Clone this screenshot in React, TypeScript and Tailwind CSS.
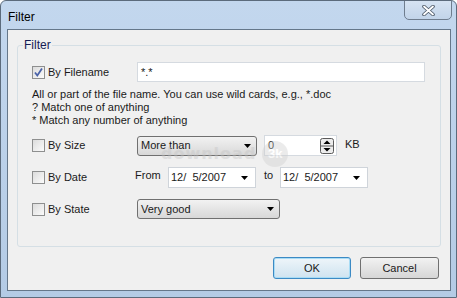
import React from 'react';

const font = { fontFamily: '"Liberation Sans", Arial, sans-serif' };

const Check = ({ checked }: { checked?: boolean }) => (
  <div className="w-[13px] h-[13px] border border-[#8e8f8f] bg-gradient-to-br from-[#dcdcdc] to-[#fbfbfb] flex items-center justify-center shrink-0">
    {checked && (
      <svg width="11" height="11" viewBox="0 0 11 11">
        <path d="M2 5.5 L4.3 8.5 L9 1.5" fill="none" stroke="#4a62a8" strokeWidth="1.8" />
      </svg>
    )}
  </div>
);

const Arrow = () => (
  <svg width="7" height="4" viewBox="0 0 7 4" className="shrink-0">
    <path d="M0 0 H7 L3.5 4 Z" fill="#000" />
  </svg>
);

const Combo = ({ value, w }: { value: string; w: string }) => (
  <div className={`${w} h-[20px] rounded-[3px] border border-[#707070] bg-gradient-to-b from-[#f2f2f2] to-[#d8d8d8] flex items-center pl-[3px] pr-[5px] justify-between`}>
    <span>{value}</span>
    <Arrow />
  </div>
);

const DateBox = ({ value }: { value: string }) => (
  <div className="w-[88px] h-[21px] border border-[#cfd4da] bg-white flex items-center pl-[2px] pr-[7px] justify-between">
    <span className="whitespace-pre">{value}</span>
    <Arrow />
  </div>
);

const Label = ({ checked, text }: { checked?: boolean; text: string }) => (
  <div className="w-[105px] flex items-center gap-[3px] shrink-0">
    <Check checked={checked} />
    <span>{text}</span>
  </div>
);

export default function App() {
  return (
    <div
      className="w-[457px] h-[298px] overflow-hidden relative bg-gradient-to-b from-[#c3d7ee] to-[#b4cbe5] border border-[#5c6b7c] rounded-t-[6px] text-[11px] text-[#1a1a1a] flex flex-col"
      style={font}
    >
      {/* title bar */}
      <div className="h-[28px] flex items-start justify-between shrink-0">
        <span className="ml-[7px] mt-[7px] text-[12px] text-black">Filter</span>
        <div className="w-[48px] h-[20px] mr-[4px] -mt-px rounded-b-[5px] border border-[#6f7d8e] bg-gradient-to-b from-[#d6e3f2] to-[#c2d4e9] flex items-center justify-center">
          <svg width="13" height="11" viewBox="0 0 13 11">
            <path d="M2 1.5 L11 9.5 M11 1.5 L2 9.5" stroke="#4d5968" strokeWidth="3.6" strokeLinecap="round" />
            <path d="M2 1.5 L11 9.5 M11 1.5 L2 9.5" stroke="#fff" strokeWidth="1.8" strokeLinecap="round" />
          </svg>
        </div>
      </div>

      {/* client area */}
      <div className="ml-[6px] mr-[5px] h-[262px] border border-[#65778a] bg-[#f0f0f0] flex flex-col shrink-0">
        {/* group box */}
        <div className="relative ml-[9px] mt-[15px] w-[424px] h-[202px] border border-[#d5dfe5] rounded-[3px] flex flex-col pl-[14px]">
          <span className="absolute -top-[8px] left-[5px] px-[1px] bg-[#f0f0f0] text-[12px] text-[#151c55] leading-[14px]">Filter</span>

          <div className="mt-[16px] flex items-center h-[20px]">
            <Label checked text="By Filename" />
            <div className="w-[288px] h-[20px] border border-[#d5dae0] bg-white flex items-center pl-[3px]">*.*</div>
          </div>

          <div className="mt-[6px] leading-[13px]">
            <div>All or part of the file name. You can use wild cards, e.g., *.doc</div>
            <div>? Match one of anything</div>
            <div>* Match any number of anything</div>
          </div>

          <div className="mt-[8px] flex items-center h-[21px]">
            <Label text="By Size" />
            <Combo value="More than" w="w-[120px]" />
            <div className="ml-[7px] w-[73px] h-[21px] border border-[#d5dae0] bg-white flex items-center justify-between pl-[3px] pr-[2px]">
              <span>0</span>
              <svg width="14" height="16" viewBox="0 0 14 16">
                <rect x="0.5" y="0.5" width="13" height="15" rx="2" fill="#ececec" stroke="#5b5b5b" />
                <path d="M1 8 H13" stroke="#5b5b5b" />
                <path d="M3.5 6 L7 2.5 L10.5 6 Z" fill="#000" />
                <path d="M3.5 10 L7 13.5 L10.5 10 Z" fill="#000" />
              </svg>
            </div>
            <span className="ml-[8px] self-start mt-px">KB</span>
          </div>

          <div className="mt-[11px] flex items-center h-[21px]">
            <Label text="By Date" />
            <span className="-ml-[2px] w-[33px] self-start">From</span>
            <DateBox value="12/  5/2007" />
            <span className="ml-[8px] w-[16px] self-start">to</span>
            <DateBox value="12/  5/2007" />
          </div>

          <div className="mt-[11px] flex items-center h-[20px]">
            <Label text="By State" />
            <Combo value="Very good" w="w-[143px]" />
          </div>
        </div>

        {/* buttons */}
        <div className="mt-[10px] flex justify-end gap-[9px] pr-[11px]">
          <div className="w-[78px] h-[22px] rounded-[3px] border border-[#3c8ac4] shadow-[inset_0_0_0_1px_#a9dcf5] bg-gradient-to-b from-[#eef5fa] to-[#cfe3f0] flex items-center justify-center">
            OK
          </div>
          <div className="w-[79px] h-[22px] rounded-[3px] border border-[#707070] bg-gradient-to-b from-[#f2f2f2] to-[#d6d6d6] flex items-center justify-center">
            Cancel
          </div>
        </div>
      </div>

      {/* watermark */}
      <div className="absolute left-[160px] top-[140px] flex items-center gap-[6px] pointer-events-none opacity-40">
        <span className="font-bold text-[16px] tracking-[1px] text-[#c4c4c4]" style={{ fontFamily: '"DejaVu Sans", sans-serif' }}>
          download
        </span>
        <span className="w-[26px] h-[26px] rounded-full bg-[#cfcfcf] text-white font-bold text-[13px] flex items-center justify-center">
          3k
        </span>
      </div>
    </div>
  );
}
